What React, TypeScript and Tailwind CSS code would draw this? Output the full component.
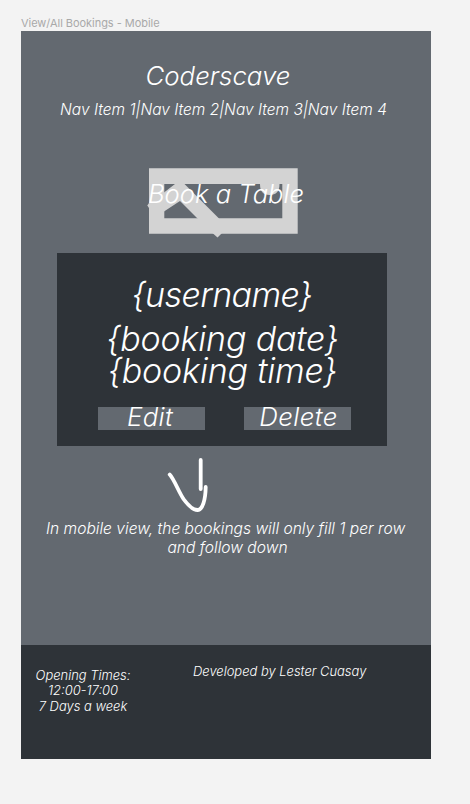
import type { ReactNode } from "react";

function Line({ className = "", children }: { className?: string; children: ReactNode }) {
  return <p className={`whitespace-nowrap text-center ${className}`}>{children}</p>;
}

function ImagePlaceholder() {
  return (
    <svg className="absolute -left-1 top-0" width="160" height="72" viewBox="145 168 160 72" fill="#d3d3d3">
      <path fillRule="evenodd" d="M149 168.3H297.7V233.8H149ZM164.300 184V218.300H282.3V184Z" />
      <path d="M147.300 205.500L149 203L164 192.5L175 184L180 179L184.5 184L219 218.500L222 233L217.5 237.5L213 233.5L197.5 218.5L180 201L164 211.500L149 208Z" />
      <path d="M260 184H279.500Q279.500 195 269.500 195Q260 195 260 184Z" />
    </svg>
  );
}

export default function App() {
  return (
    <div className="h-[804px] w-[470px] overflow-hidden bg-[#f3f3f3] pl-[21px] pt-[16px] font-['Inter',sans-serif]">
      <div className="h-[15px] whitespace-nowrap text-[11px] leading-[15px] text-[#a9a9a9]">
        <span className="tracking-[-0.04px]">View/All Bookings - Mobile</span>
      </div>
      <main className="flex h-[728px] w-[410px] flex-col bg-[#636970] font-light italic text-white">
        <header className="flex flex-col items-center pt-[29px]">
          <Line className="-ml-[16px] text-[25.800px] leading-[32px]">Coderscave</Line>
          <Line className="mt-[8px] -ml-[5px] text-[15.500px] leading-[20px]">Nav Item 1|Nav Item 2|Nav Item 3|Nav Item 4</Line>
        </header>
        <section className="relative ml-[128px] mt-[48px] h-[66px] w-[149px]">
          <ImagePlaceholder />
          <Line className="relative -ml-[1px] pt-[10px] !text-left text-[25.600px] leading-[32px]">Book a Table</Line>
        </section>
        <section className="ml-[36px] mt-[19px] h-[193px] w-[330px] bg-[#2e3338] pt-[22px] font-[360]">
          <Line className="text-[34px] leading-[40px] tracking-[-0.6px]">{"{username}"}</Line>
          <Line className="mt-[8px] pl-[1px] text-[34px] leading-[32px] tracking-[-0.18px]">{"{booking date}"}</Line>
          <Line className="pl-[1px] text-[34px] leading-[32px] tracking-[-0.18px]">{"{booking time}"}</Line>
          <div className="ml-[41px] mt-[20px] flex gap-[39px]">
            <button className="flex h-[23px] w-[107px] justify-center whitespace-nowrap bg-[#636970] pr-[3px] text-[25.800px] leading-[20px] tracking-[0.3px]">Edit</button>
            <button className="flex h-[23px] w-[107px] justify-center whitespace-nowrap bg-[#636970] pl-[2px] text-[25.800px] leading-[20px] tracking-[0.400px]">Delete</button>
          </div>
        </section>
        <svg className="ml-[139px] mt-[6px] shrink-0" width="60" height="66" viewBox="160 452 60 66" fill="none" stroke="white" strokeWidth="3.8" strokeLinecap="round" strokeLinejoin="round">
          <path d="M200.700 460V489M169.700 474.500C174 479 178.500 491.500 183.500 499C189 506.500 194 510 197.500 510C202.500 510 205.500 500 205.700 487" />
        </svg>
        <div className="-ml-[1px] mt-[1px] text-[15.600px] leading-[19.400px]">
          <Line>In mobile view, the bookings will only fill 1 per row</Line>
          <Line className="pl-[4px]">and follow down</Line>
        </div>
        <footer className="mt-auto flex h-[114px] bg-[#2e3338] text-[12.950px]">
          <div className="w-[124px] pt-[22.700px] leading-[15.600px]">
            <Line>Opening Times:</Line>
            <Line>12:00-17:00</Line>
            <Line>7 Days a week</Line>
          </div>
          <p className="ml-[48px] pt-[18px] leading-[16px]">Developed by Lester Cuasay</p>
        </footer>
      </main>
    </div>
  );
}
